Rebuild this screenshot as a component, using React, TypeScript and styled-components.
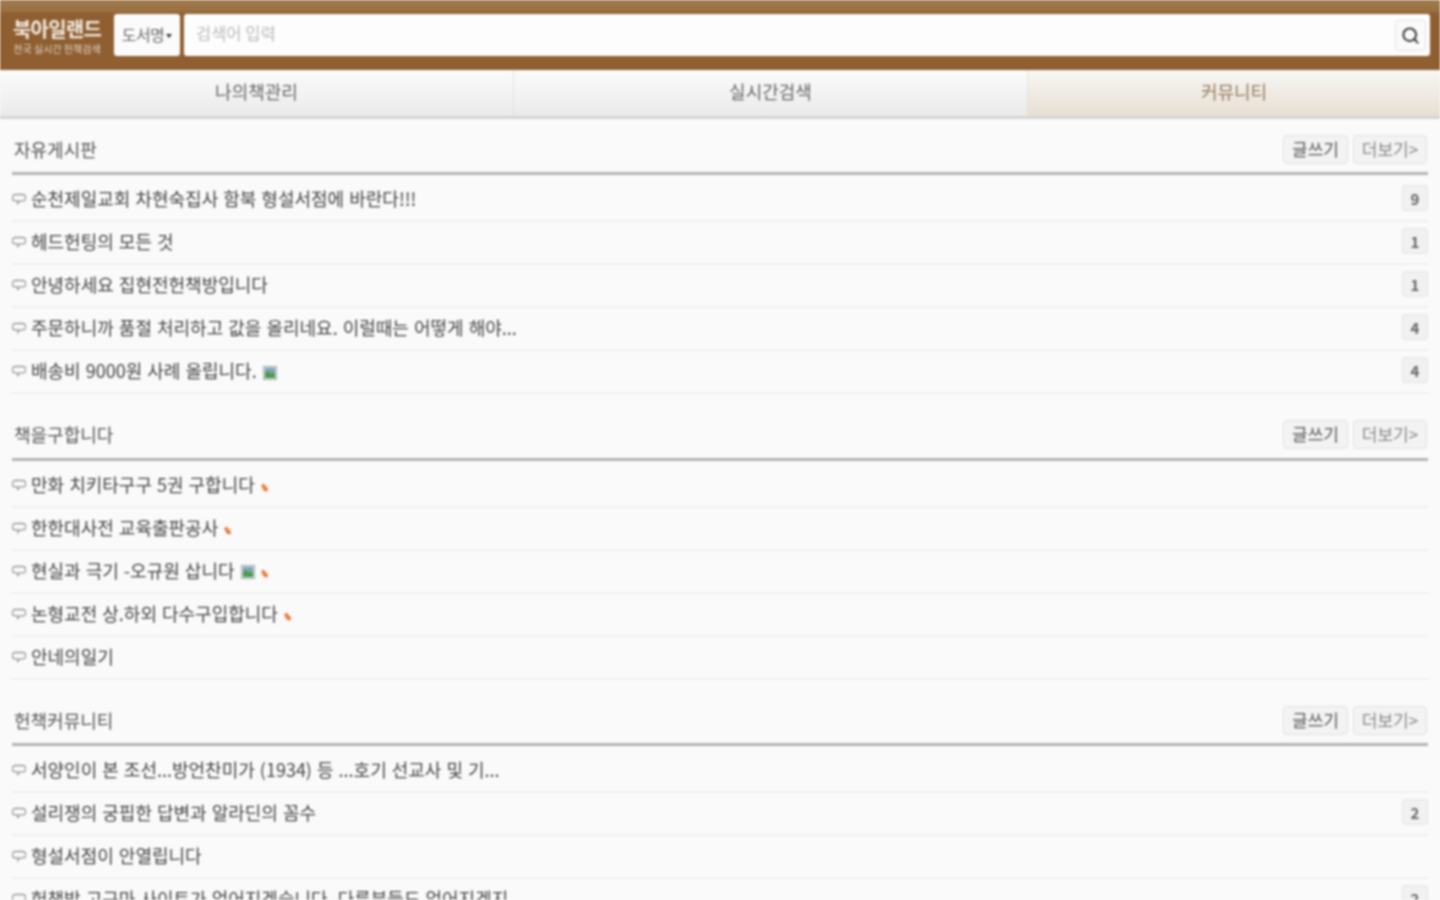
import styled, { createGlobalStyle } from "styled-components";
import { Search } from "lucide-react";

interface Post {
  title: string;
  count?: number;
  hasImage?: boolean;
  isNew?: boolean;
}

interface Board {
  name: string;
  posts: Post[];
}

const boards: Board[] = [
  {
    name: "자유게시판",
    posts: [
      { title: "순천제일교회 차현숙집사 함북 형설서점에 바란다!!!", count: 9 },
      { title: "헤드헌팅의 모든 것", count: 1 },
      { title: "안녕하세요 집현전헌책방입니다", count: 1 },
      { title: "주문하니까 품절 처리하고 값을 올리네요. 이럴때는 어떻게 해야...", count: 4 },
      { title: "배송비 9000원 사례 올립니다.", count: 4, hasImage: true },
    ],
  },
  {
    name: "책을구합니다",
    posts: [
      { title: "만화 치키타구구 5권 구합니다", isNew: true },
      { title: "한한대사전 교육출판공사", isNew: true },
      { title: "현실과 극기 -오규원 삽니다", hasImage: true, isNew: true },
      { title: "논형교전 상.하외 다수구입합니다", isNew: true },
      { title: "안네의일기" },
    ],
  },
  {
    name: "헌책커뮤니티",
    posts: [
      { title: "서양인이 본 조선...방언찬미가 (1934) 등 ...호기 선교사 및 기..." },
      { title: "설리쟁의 궁핍한 답변과 알라딘의 꼼수", count: 2 },
      { title: "형설서점이 안열립니다" },
      { title: "헌책방 고구마 사이트가 없어지겠습니다. 다른분들도 없어지겠지", count: 2 },
    ],
  },
];

const GlobalStyle = createGlobalStyle`
  html, body {
    margin: 0;
    height: 100%;
    overflow: hidden;
    background: #fafafa;
  }
  body {
    font-family: "Noto Sans CJK KR", "Noto Sans", sans-serif;
    color: #555;
  }
`;

const Page = styled.div`
  width: 1440px;
  height: 900px;
  overflow: hidden;
  background: #fafafa;
  filter: blur(0.8px);
`;

const Header = styled.header`
  display: flex;
  align-items: center;
  gap: 4px;
  height: 70px;
  box-sizing: border-box;
  padding: 0 10px 0 12px;
  background: linear-gradient(#a07a50 0, #99703f 12px, #8f5f31 13px, #8f5f31 100%);
`;

const Logo = styled.div`
  display: flex;
  flex-direction: column;
  align-items: center;
  width: 90px;
  margin: 2px 8px 0 0;
  color: #f2ebe2;
`;

const LogoName = styled.div`
  font-size: 20px;
  line-height: 26px;
  font-weight: 700;
  letter-spacing: -0.8px;
  white-space: nowrap;
`;

const LogoSub = styled.div`
  font-size: 10px;
  line-height: 14px;
  color: #e0d3c2;
  white-space: nowrap;
`;

const CategorySelect = styled.div`
  display: flex;
  align-items: center;
  justify-content: center;
  width: 66px;
  height: 42px;
  box-sizing: border-box;
  padding-bottom: 3px;
  background: #fbfbfb;
  border-radius: 3px;
  font-size: 16px;
  letter-spacing: -0.5px;
  color: #666;
  white-space: nowrap;

  &::after {
    content: "";
    margin: 4px 0 0 2px;
    border-style: solid;
    border-width: 4px 3px 0;
    border-color: #333 transparent transparent;
  }
`;

const SearchBox = styled.div`
  flex: 1;
  display: flex;
  align-items: center;
  justify-content: space-between;
  height: 42px;
  box-sizing: border-box;
  padding: 0 4px 0 12px;
  background: #fdfdfd;
  border-radius: 3px;
`;

const Placeholder = styled.span`
  font-size: 16.5px;
  line-height: 38px;
  height: 42px;
  color: #bbb;
`;

const SearchButton = styled.div`
  display: flex;
  align-items: center;
  justify-content: center;
  width: 31px;
  height: 31px;
  box-sizing: border-box;
  border: 1px solid #e4e4e4;
  border-radius: 3px;
  background: #fafafa;
  color: #333;
`;

const Tabs = styled.nav`
  display: grid;
  grid-template-columns: 514px 514px 412px;
  height: 49px;
  box-sizing: border-box;
  border-bottom: 3px solid #d5d5d3;
`;

const Tab = styled.div<{ $active?: boolean }>`
  display: flex;
  align-items: center;
  justify-content: center;
  padding-bottom: 5px;
  font-size: 18px;
  color: ${(p) => (p.$active ? "#927a5c" : "#666")};
  background: ${(p) =>
    p.$active
      ? "linear-gradient(#f8f7f4, #e7dfd3)"
      : "linear-gradient(#fbfbfb, #e9ebe9)"};
  border-right: ${(p) => (p.$active ? "none" : "1px solid #e2e4e2")};
`;

const Boards = styled.main`
  padding: 4px 12px 0;
`;

const Section = styled.section`
  & + & {
    margin-top: 14.5px;
  }
`;

const SectionHead = styled.div`
  display: flex;
  align-items: center;
  justify-content: space-between;
  height: 52px;
  box-sizing: border-box;
  padding: 2px 1px 0 2px;
  border-bottom: 3px solid #b4b4b4;
`;

const SectionTitle = styled.h2`
  margin: 0;
  font-size: 18px;
  font-weight: 400;
  color: #555;
`;

const ButtonGroup = styled.div`
  display: flex;
  gap: 5px;
  margin-top: 1px;
`;

const HeadButton = styled.div<{ $muted?: boolean }>`
  display: flex;
  align-items: center;
  justify-content: center;
  height: 29px;
  width: ${(p) => (p.$muted ? "74px" : "65px")};
  box-sizing: border-box;
  padding-bottom: 2px;
  border: 1px solid #e2e2e2;
  border-radius: 4px;
  background: #f3f3f3;
  font-size: 17px;
  color: ${(p) => (p.$muted ? "#888" : "#555")};
  white-space: nowrap;
`;

const RowList = styled.div`
  padding-top: 4px;
`;

const Row = styled.div`
  display: flex;
  align-items: center;
  height: 43px;
  box-sizing: border-box;
  padding-bottom: 3px;
  border-bottom: 2px solid #f0f0f0;
`;

const Bubble = styled.svg`
  flex: none;
  width: 14px;
  height: 12px;
  margin: 2px 5px 0 0;
  color: #999;
`;

const RowTitle = styled.span`
  font-size: 18px;
  word-spacing: 1px;
  line-height: 24px;
  color: #444;
  white-space: nowrap;
`;

const ImageMark = styled.svg`
  flex: none;
  width: 14px;
  height: 14px;
  margin: 5px 0 0 6px;
`;

const NewMark = styled.svg`
  flex: none;
  width: 9px;
  height: 9px;
  margin: 8px 0 0 5px;
  color: #ee7b45;
`;

const CountBadge = styled.div`
  display: flex;
  align-items: center;
  justify-content: center;
  width: 26px;
  height: 26px;
  margin-left: auto;
  box-sizing: border-box;
  border: 1px solid #e4e4e4;
  border-radius: 3px;
  background: #f1f1f1;
  font-size: 15px;
  font-weight: 700;
  color: #666;
`;

const BubbleIcon = () => (
  <Bubble viewBox="0 0 14 12" fill="none" stroke="currentColor" strokeWidth="1.3">
    <path d="M3.5 1.5h7a2.7 2.7 0 0 1 0 6.4H8L5.8 10.4V7.9H3.5a2.7 2.7 0 0 1 0-6.4z" />
  </Bubble>
);

const ImageIcon = () => (
  <ImageMark viewBox="0 0 14 14">
    <rect x="0.5" y="0.5" width="13" height="13" fill="#cfd8dc" stroke="#9fb0b8" />
    <rect x="2" y="2" width="10" height="6" fill="#7fa6b4" />
    <path d="M2 12V7l3-2 3 3 2-2 2 2v4z" fill="#4f9a4b" />
  </ImageMark>
);

const NewIcon = () => (
  <NewMark viewBox="0 0 9 9" fill="currentColor">
    <path d="M1 2.5L3.5 .5 8 5.5 7.5 8.5 4 8z" />
  </NewMark>
);

const App = () => {
  return (
    <Page>
      <GlobalStyle />
      <Header>
        <Logo>
          <LogoName>북아일랜드</LogoName>
          <LogoSub>전국 실시간 헌책검색</LogoSub>
        </Logo>
        <CategorySelect>도서명</CategorySelect>
        <SearchBox>
          <Placeholder>검색어 입력</Placeholder>
          <SearchButton>
            <Search size={19} strokeWidth={2.4} />
          </SearchButton>
        </SearchBox>
      </Header>
      <Tabs>
        <Tab>나의책관리</Tab>
        <Tab>실시간검색</Tab>
        <Tab $active>커뮤니티</Tab>
      </Tabs>
      <Boards>
        {boards.map((board) => (
          <Section key={board.name}>
            <SectionHead>
              <SectionTitle>{board.name}</SectionTitle>
              <ButtonGroup>
                <HeadButton>글쓰기</HeadButton>
                <HeadButton $muted>더보기&gt;</HeadButton>
              </ButtonGroup>
            </SectionHead>
            <RowList>
              {board.posts.map((post) => (
                <Row key={post.title}>
                  <BubbleIcon />
                  <RowTitle>{post.title}</RowTitle>
                  {post.hasImage && <ImageIcon />}
                  {post.isNew && <NewIcon />}
                  {post.count !== undefined && <CountBadge>{post.count}</CountBadge>}
                </Row>
              ))}
            </RowList>
          </Section>
        ))}
      </Boards>
    </Page>
  );
};

export default App;
